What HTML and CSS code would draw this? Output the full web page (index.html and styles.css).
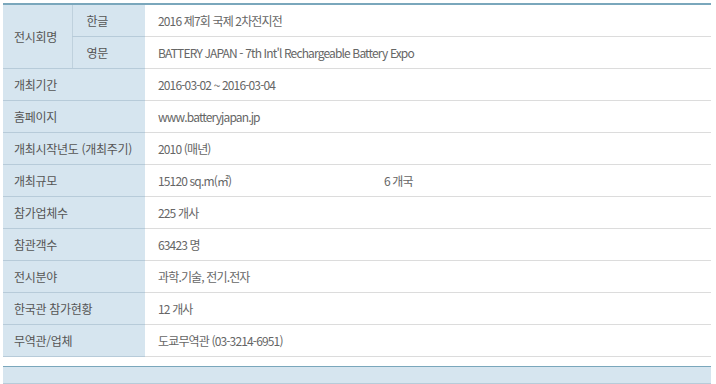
FILE: index.html
```html
<!DOCTYPE html>
<html lang="ko">
<head>
<meta charset="utf-8">
<link rel="stylesheet" href="styles.css">
</head>
<body>
<div class="wrap">
<table class="info">
  <colgroup>
    <col class="c1">
    <col class="c2">
    <col class="c3">
    <col class="c4">
  </colgroup>
  <tr>
    <th class="lab" rowspan="2">전시회명</th>
    <th class="sub">한글</th>
    <td class="val" colspan="2">2016 제7회 국제 2차전지전</td>
  </tr>
  <tr>
    <th class="sub">영문</th>
    <td class="val" colspan="2">BATTERY JAPAN - 7th Int'l Rechargeable Battery Expo</td>
  </tr>
  <tr><th class="lab" colspan="2">개최기간</th><td class="val" colspan="2">2016-03-02 ~ 2016-03-04</td></tr>
  <tr><th class="lab" colspan="2">홈페이지</th><td class="val" colspan="2">www.batteryjapan.jp</td></tr>
  <tr><th class="lab" colspan="2">개최시작년도 (개최주기)</th><td class="val" colspan="2">2010 (매년)</td></tr>
  <tr><th class="lab" colspan="2">개최규모</th><td class="val">15120 sq.m(㎡)</td><td class="val">6 개국</td></tr>
  <tr><th class="lab" colspan="2">참가업체수</th><td class="val" colspan="2">225 개사</td></tr>
  <tr><th class="lab" colspan="2">참관객수</th><td class="val" colspan="2">63423 명</td></tr>
  <tr><th class="lab" colspan="2">전시분야</th><td class="val" colspan="2">과학.기술, 전기.전자</td></tr>
  <tr><th class="lab" colspan="2">한국관 참가현황</th><td class="val" colspan="2">12 개사</td></tr>
  <tr><th class="lab" colspan="2">무역관/업체</th><td class="val" colspan="2">도쿄무역관 (03-3214-6951)</td></tr>
</table>
<div class="footbar"></div>
</div>
</body>
</html>
```
FILE: styles.css
```css
html, body { margin: 0; padding: 0; background: #fff; }
body { font-family: "Noto Sans CJK KR", "Noto Sans", sans-serif; font-size: 12px; color: #666; }
.wrap { padding: 3px 5px 0 3px; }
.info { width: 708px; border-collapse: collapse; border-top: 2px solid #7aa7bc; table-layout: fixed; }
.c1 { width: 69px; }
.c2 { width: 73px; }
.c3 { width: 226px; }
.c4 { width: auto; }
.info th, .info td { height: 31px; padding: 0; text-align: left; font-weight: normal; vertical-align: middle; white-space: nowrap; }
.info th { background: #d6e5ef; color: #555; border-bottom: 1px solid #b7cbd9; letter-spacing: -0.3px; }
.info td { border-bottom: 1px solid #dcdcdc; }
.lab { padding-left: 11px !important; }
.sub { padding-left: 14px !important; border-left: 1px solid #bfd1dd; }
.val { padding-left: 13px !important; letter-spacing: -0.85px; }
.footbar { margin-top: 9px; width: 708px; height: 18px; box-sizing: border-box; background: #d6e5ef; border-top: 1px solid #7aa7bc; border-bottom: 1px solid #b7cbd9; }
```
